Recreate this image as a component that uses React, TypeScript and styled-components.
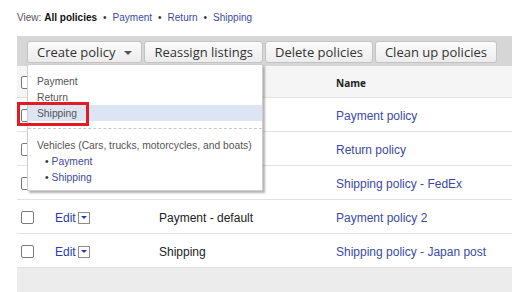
import * as React from 'react';
import styled, { createGlobalStyle } from 'styled-components';

const GlobalStyle = createGlobalStyle`
    html, body {
        margin: 0;
        padding: 0;
        background: #fff;
        overflow: hidden;
    }
    body {
        font-family: "Liberation Sans", Arial, sans-serif;
    }
`;

const Page = styled.div`
    width: 512px;
    height: 292px;
    padding-left: 17px;
    box-sizing: border-box;
    position: relative;
    overflow: hidden;
`;

const ViewBar = styled.div`
    display: flex;
    align-items: center;
    height: 14px;
    margin-top: 10px;
    margin-bottom: 12px;
    font-size: 10px;
    color: #555;
    white-space: nowrap;
`;

const ViewLabel = styled.span`
    margin-right: 3px;
`;

const ViewCurrent = styled.b`
    color: #111;
`;

const Dot = styled.span`
    margin: 0 6px;
    color: #333;
`;

const ViewLink = styled.a`
    color: #3b4aa6;
    text-decoration: none;
`;

const Board = styled.div`
    position: relative;
`;

const Toolbar = styled.div`
    display: flex;
    gap: 2px;
    height: 30px;
    padding: 5px 0 0 10px;
    box-sizing: border-box;
    background: #d6d6d6;
`;

const ToolButton = styled.button`
    display: flex;
    align-items: center;
    gap: 9px;
    height: 22px;
    padding: 0 9px;
    border: 1px solid #c3c3c3;
    border-radius: 3px;
    background: linear-gradient(#fbfbfb, #ececec);
    font-family: "Open Sans", sans-serif;
    font-size: 13px;
    color: #333;
    white-space: nowrap;
`;

const Caret = styled.span`
    width: 0;
    height: 0;
    margin-top: 2px;
    border-left: 4px solid transparent;
    border-right: 4px solid transparent;
    border-top: 4px solid #555;
`;

const Row = styled.div<{ $head?: boolean }>`
    display: grid;
    grid-template-columns: 38px 104px 177px 1fr;
    align-items: center;
    height: ${p => (p.$head ? '32px' : '34px')};
    padding-top: 2px;
    box-sizing: border-box;
    border-bottom: 1px solid #e2e2e2;
    background: ${p => (p.$head ? '#f5f5f5' : '#fff')};
    font-size: 12px;
    color: #222;
    white-space: nowrap;
`;

const HeadName = styled.div`
    font-family: "Open Sans", sans-serif;
    font-weight: 700;
    font-size: 10px;
    color: #222;
`;

const CheckBox = styled.span`
    width: 11px;
    height: 11px;
    margin-left: 4px;
    border: 1px solid #7a7a7a;
    border-radius: 2px;
    background: #fff;
`;

const EditCell = styled.div`
    display: flex;
    align-items: center;
    gap: 2px;
`;

const EditLink = styled.a`
    color: #2b3bb0;
    text-decoration: none;
`;

const EditArrow = styled.span`
    display: flex;
    align-items: center;
    justify-content: center;
    width: 10px;
    height: 10px;
    border: 1px solid #8c8c8c;
    background: #fff;
    &::after {
        content: '';
        border-left: 3px solid transparent;
        border-right: 3px solid transparent;
        border-top: 3px solid #1f3fb8;
    }
`;

const NameLink = styled.a`
    color: #3b4aa6;
    text-decoration: none;
`;

const Footer = styled.div`
    height: 24px;
    background: #ececec;
`;

const Menu = styled.div`
    position: absolute;
    left: 10px;
    top: 28px;
    width: 236px;
    height: 127px;
    box-sizing: border-box;
    padding-top: 8px;
    background: #fff;
    border: 1px solid #cfcfcf;
    box-shadow: 2px 2px 2px rgba(0, 0, 0, 0.3);
    font-size: 10.3px;
    color: #555;
    z-index: 2;
`;

const MenuItem = styled.div<{ $active?: boolean; $sub?: boolean }>`
    display: flex;
    align-items: center;
    height: 16px;
    padding-left: ${p => (p.$sub ? '17px' : '9px')};
    background: ${p => (p.$active ? '#dde4f3' : 'transparent')};
    color: ${p => (p.$sub ? '#3d4a9c' : '#555')};
`;

const Bullet = styled.span`
    margin-right: 3px;
    color: #333;
`;

const MenuDivider = styled.div`
    margin: 7px 0 8px;
    border-top: 1px dashed #c8c8c8;
`;

const Highlight = styled.div`
    position: absolute;
    left: 0;
    top: 66px;
    width: 72px;
    height: 24px;
    box-sizing: border-box;
    border: 3px solid #e31b23;
    z-index: 3;
`;

const rows = [
    { type: 'Payment', name: 'Payment policy' },
    { type: 'Return', name: 'Return policy' },
    { type: 'Shipping', name: 'Shipping policy - FedEx' },
    { type: 'Payment - default', name: 'Payment policy 2' },
    { type: 'Shipping', name: 'Shipping policy - Japan post' },
];

export default function App() {
    return (
        <Page>
            <GlobalStyle />
            <ViewBar>
                <ViewLabel>View:</ViewLabel>
                <ViewCurrent>All policies</ViewCurrent>
                <Dot>•</Dot>
                <ViewLink>Payment</ViewLink>
                <Dot>•</Dot>
                <ViewLink>Return</ViewLink>
                <Dot>•</Dot>
                <ViewLink>Shipping</ViewLink>
            </ViewBar>
            <Board>
                <Toolbar>
                    <ToolButton>Create policy<Caret /></ToolButton>
                    <ToolButton>Reassign listings</ToolButton>
                    <ToolButton>Delete policies</ToolButton>
                    <ToolButton>Clean up policies</ToolButton>
                </Toolbar>
                <Row $head>
                    <CheckBox />
                    <div />
                    <div />
                    <HeadName>Name</HeadName>
                </Row>
                {rows.map((r, i) => (
                    <Row key={i}>
                        <CheckBox />
                        <EditCell>
                            <EditLink>Edit</EditLink>
                            <EditArrow />
                        </EditCell>
                        <div>{r.type}</div>
                        <NameLink>{r.name}</NameLink>
                    </Row>
                ))}
                <Footer />
                <Menu>
                    <MenuItem>Payment</MenuItem>
                    <MenuItem>Return</MenuItem>
                    <MenuItem $active>Shipping</MenuItem>
                    <MenuDivider />
                    <MenuItem>Vehicles (Cars, trucks, motorcycles, and boats)</MenuItem>
                    <MenuItem $sub><Bullet>•</Bullet>Payment</MenuItem>
                    <MenuItem $sub><Bullet>•</Bullet>Shipping</MenuItem>
                </Menu>
                <Highlight />
            </Board>
        </Page>
    );
}
